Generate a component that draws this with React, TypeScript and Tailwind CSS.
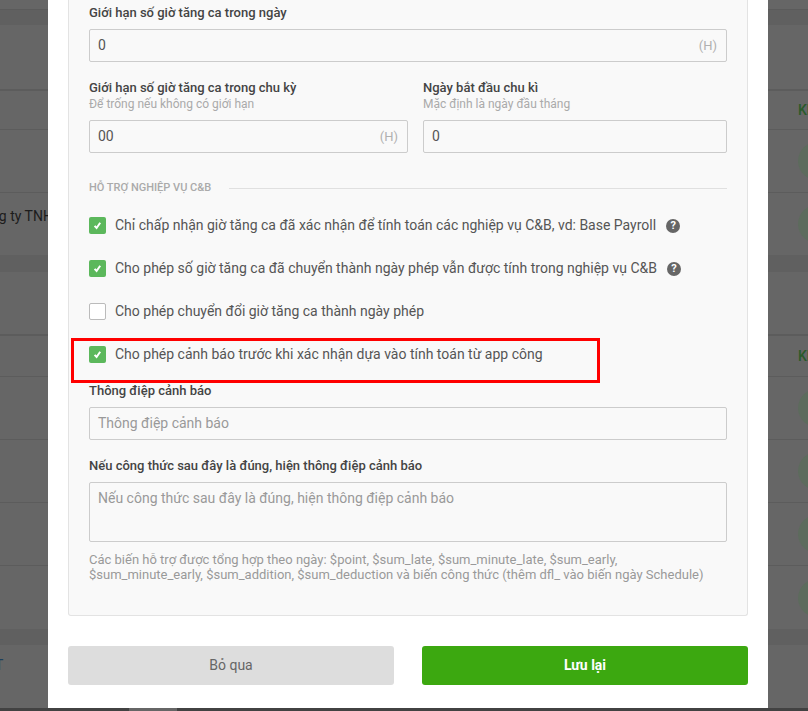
import React from "react";

const font = { fontFamily: "Roboto, 'Noto Sans', sans-serif" };

function Check({ checked }: { checked: boolean }) {
  if (!checked) {
    return <span className="w-[17px] h-[17px] shrink-0 rounded-[2px] border border-[#bbbbbb] bg-white" />;
  }
  return (
    <span className="w-[17px] h-[17px] shrink-0 rounded-[2px] bg-[#5cb85c] flex items-center justify-center">
      <svg width="11" height="11" viewBox="0 0 11 11" fill="none">
        <path d="M2.6 5.8 L4.6 8 L8.2 2.8" stroke="#ffffff" strokeWidth="2" />
      </svg>
    </span>
  );
}

function Help() {
  return (
    <span className="w-[14px] h-[14px] rounded-full bg-[#666666] text-white text-[11px] font-bold leading-[14px] text-center shrink-0">
      ?
    </span>
  );
}

function Option({ checked, text, help, gap }: { checked: boolean; text: string; help?: boolean; gap?: string }) {
  return (
    <div className="h-[43px] flex items-center">
      <Check checked={checked} />
      <span className="ml-[9px] text-[14px] text-[#555555]">{text}</span>
      {help && <span className={gap}><Help /></span>}
    </div>
  );
}

function Input({ value, suffix, placeholder }: { value?: string; suffix?: boolean; placeholder?: string }) {
  return (
    <div className="h-[33px] border border-[#cccccc] rounded-[2px] bg-[#f9f9f9] flex items-center justify-between pl-[8px] pr-[9px] text-[14px]">
      {placeholder ? <span className="text-[#999999]">{placeholder}</span> : <span className="text-[#555555]">{value}</span>}
      {suffix && <span className="text-[13px] text-[#b0b0b0]">(H)</span>}
    </div>
  );
}

const rows: [number, string][] = [
  [9, "bg-[#666666]"],
  [16, "bg-[#606060] border-t border-[#5b5b5b]"],
  [64, "bg-[#666666]"],
  [2, "bg-[#5c5c5c]"],
  [39, "bg-[#666666] border-b border-[#5c5c5c]"],
  [63, "bg-[#666666] border-b border-[#5c5c5c]"],
  [62, "bg-[#666666]"],
  [17, "bg-[#606060]"],
  [64, "bg-[#666666] border-b-2 border-[#5c5c5c]"],
  [41, "bg-[#666666] border-b border-[#5c5c5c]"],
  [63, "bg-[#666666] border-b border-[#5c5c5c]"],
  [63, "bg-[#666666] border-b border-[#5c5c5c]"],
  [63, "bg-[#666666] border-b border-[#5c5c5c]"],
  [63, "bg-[#666666]"],
  [16, "bg-[#606060]"],
  [63, "bg-[#666666]"],
];

function LeftCell({ i }: { i: number }) {
  if (i === 6) {
    return (
      <div className="h-full flex items-center ml-[-26px] pb-[16px] whitespace-nowrap text-[14px] text-[#1c1c1c]">
        Công ty TNHH
      </div>
    );
  }
  if (i === 15) {
    return (
      <div className="h-full flex items-center ml-[-5px] pb-[22px] whitespace-nowrap text-[14px] text-[#1c3f5c]">
        T
      </div>
    );
  }
  return null;
}

function RightCell({ i }: { i: number }) {
  if (i === 4 || i === 9) {
    return (
      <div className="h-full flex items-center pl-[30px] whitespace-nowrap text-[14px] font-medium text-[#2a5a2a]">
        KH
      </div>
    );
  }
  if (i === 5 || i === 6 || (i >= 10 && i <= 13)) {
    return (
      <div className="h-full flex items-center pl-[30px]">
        <span className="w-[38px] h-[38px] rounded-full bg-[#5d6b5d] shrink-0" />
      </div>
    );
  }
  return null;
}

function Strip({ side }: { side: "left" | "right" }) {
  return (
    <div className={side === "left" ? "w-[48px] shrink-0 overflow-hidden" : "w-[40px] shrink-0 overflow-hidden"}>
      {rows.map(([h, cls], i) => (
        <div key={i} className={cls + " overflow-hidden"} style={{ height: h }}>
          {side === "left" ? <LeftCell i={i} /> : <RightCell i={i} />}
        </div>
      ))}
    </div>
  );
}

export default function App() {
  return (
    <div className="relative w-[808px] h-[711px] overflow-hidden bg-[#666666]" style={font}>
      <div className="flex h-[708px]">
        <Strip side="left" />
        <div className="w-[720px] bg-white px-[20px] flex flex-col">
          <div className="h-[616px] bg-[#f9f9f9] border-x border-b border-[#e3e3e3] rounded-b-[3px] px-[20px] pt-[5px]">
            <div className="text-[13px] leading-[16px] font-medium text-[#444444]">Giới hạn số giờ tăng ca trong ngày</div>
            <div className="mt-[8px]"><Input value="0" suffix /></div>

            <div className="mt-[18px] flex gap-[15px]">
              <div className="flex-1">
                <div className="text-[13px] leading-[16px] font-medium text-[#444444]">Giới hạn số giờ tăng ca trong chu kỳ</div>
                <div className="text-[12px] leading-[16px] text-[#aaaaaa]">Để trống nếu không có giới hạn</div>
                <div className="mt-[8px]"><Input value="00" suffix /></div>
              </div>
              <div className="w-[304px]">
                <div className="text-[13px] leading-[16px] font-medium text-[#444444]">Ngày bắt đầu chu kì</div>
                <div className="text-[12px] leading-[16px] text-[#aaaaaa]">Mặc định là ngày đầu tháng</div>
                <div className="mt-[8px]"><Input value="0" /></div>
              </div>
            </div>

            <div className="mt-[27px] h-[16px] flex items-center gap-[18px]">
              <span className="text-[11px] font-medium text-[#aaaaaa] whitespace-nowrap">HỖ TRỢ NGHIỆP VỤ C&amp;B</span>
              <span className="flex-1 h-px bg-[#e0e0e0]" />
            </div>

            <div className="mt-[8px]">
              <Option checked text="Chỉ chấp nhận giờ tăng ca đã xác nhận để tính toán các nghiệp vụ C&B, vd: Base Payroll" help gap="ml-[10px] flex" />
              <Option checked text="Cho phép số giờ tăng ca đã chuyển thành ngày phép vẫn được tính trong nghiệp vụ C&B" help gap="ml-[10px] flex" />
              <Option checked={false} text="Cho phép chuyển đổi giờ tăng ca thành ngày phép" />
              <Option checked text="Cho phép cảnh báo trước khi xác nhận dựa vào tính toán từ app công" />
            </div>

            <div className="mt-[7px] text-[13px] leading-[16px] font-medium text-[#444444]">Thông điệp cảnh báo</div>
            <div className="mt-[8px]"><Input placeholder="Thông điệp cảnh báo" /></div>

            <div className="mt-[18px] text-[13px] leading-[16px] font-medium text-[#444444]">Nếu công thức sau đây là đúng, hiện thông điệp cảnh báo</div>
            <div className="mt-[8px] h-[60px] border border-[#cccccc] rounded-[2px] bg-[#f9f9f9] px-[8px] py-[6px] text-[14px] leading-[18px] text-[#999999]">
              Nếu công thức sau đây là đúng, hiện thông điệp cảnh báo
            </div>

            <div className="mt-[11px] text-[13px] leading-[14.5px] text-[#999999]">
              Các biến hỗ trợ được tổng hợp theo ngày: $point, $sum_late, $sum_minute_late, $sum_early,
              <br />
              $sum_minute_early, $sum_addition, $sum_deduction và biến công thức (thêm dfl_ vào biến ngày Schedule)
            </div>
          </div>

          <div className="mt-[30px] flex gap-[28px]">
            <button className="flex-1 h-[39px] rounded-[3px] bg-[#dddddd] text-[14px] text-[#666666]">Bỏ qua</button>
            <button className="flex-1 h-[39px] rounded-[3px] bg-[#3ca810] text-[14px] font-bold text-white">Lưu lại</button>
          </div>
        </div>
        <Strip side="right" />
      </div>

      <div className="h-[3px] flex bg-[#424242]">
        <span className="ml-[129px] w-[48px] bg-[#666666]" />
      </div>

      <div className="absolute left-[71px] top-[338px] w-[529px] h-[45px] border-[3px] border-[#ff0000]" />
    </div>
  );
}
